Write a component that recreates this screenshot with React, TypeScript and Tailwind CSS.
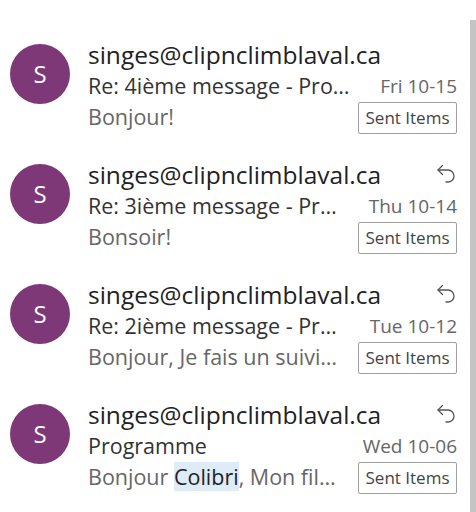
import React from "react";

type Mail = {
  subject: string;
  date: string;
  preview: React.ReactNode;
  reply: boolean;
};

const mails: Mail[] = [
  { subject: "Re: 4ième message - Programme", date: "Fri 10-15", preview: "Bonjour!", reply: false },
  { subject: "Re: 3ième message - Programme", date: "Thu 10-14", preview: "Bonsoir!", reply: true },
  {
    subject: "Re: 2ième message - Programme",
    date: "Tue 10-12",
    preview: "Bonjour, Je fais un suivi concernant le programme",
    reply: true,
  },
  {
    subject: "Programme",
    date: "Wed 10-06",
    preview: (
      <>
        Bonjour <span className="bg-[#deecf9] text-[#222]">Colibri</span>, Mon fils aimerait participer
      </>
    ),
    reply: true,
  },
];

const ReplyIcon = () => (
  <svg width="20" height="22" viewBox="0 0 20 22" fill="none" stroke="#555" strokeWidth="1.3" strokeLinecap="round" strokeLinejoin="round">
    <path d="M6.5 2.5 L2 7 L6.5 11.5" />
    <path d="M2 7 H12 A6 6 0 0 1 12 19 H10" />
  </svg>
);

const MailRow = ({ mail }: { mail: Mail }) => (
  <div className="flex items-start h-[93px]">
    <div className="ml-[10px] mt-[4px] w-[60px] h-[60px] rounded-full bg-[#7e3878] flex items-center justify-center text-white text-[24px] shrink-0">
      S
    </div>
    <div className="flex-1 min-w-0 ml-[18px] mr-[13px] flex flex-col">
      <div className="flex items-center h-[31px]">
        <span className="flex-1 min-w-0 truncate text-[24.5px] text-[#222]">singes@clipnclimblaval.ca</span>
        {mail.reply && (
          <span className="ml-2 mr-[1px] -mt-[4px]">
            <ReplyIcon />
          </span>
        )}
      </div>
      <div className="flex items-center h-[31px]">
        <span className="flex-1 min-w-0 truncate text-[21.5px] text-[#333] pr-[22px]">{mail.subject}</span>
        <span className="text-[19px] text-[#666] whitespace-nowrap">{mail.date}</span>
      </div>
      <div className="flex items-center h-[31px]">
        <span className="flex-1 min-w-0 truncate text-[21.5px] text-[#666] pr-[20px]">{mail.preview}</span>
        <span className="border border-[#a0a0a0] rounded-[2px] h-[32px] w-[99px] flex items-center justify-center text-[17px] text-[#444] whitespace-nowrap shrink-0">
          Sent Items
        </span>
      </div>
    </div>
  </div>
);

export default function App() {
  return (
    <div className="w-[476px] h-[512px] bg-white flex overflow-hidden" style={{ fontFamily: '"Open Sans", "Noto Sans", sans-serif' }}>
      <div className="flex-1 min-w-0 pt-[40px] flex flex-col gap-[27px]">
        {mails.map((m, i) => (
          <MailRow key={i} mail={m} />
        ))}
      </div>
      <div className="w-[6px] shrink-0 mt-[20px] bg-[#c4c4c4]" />
    </div>
  );
}
